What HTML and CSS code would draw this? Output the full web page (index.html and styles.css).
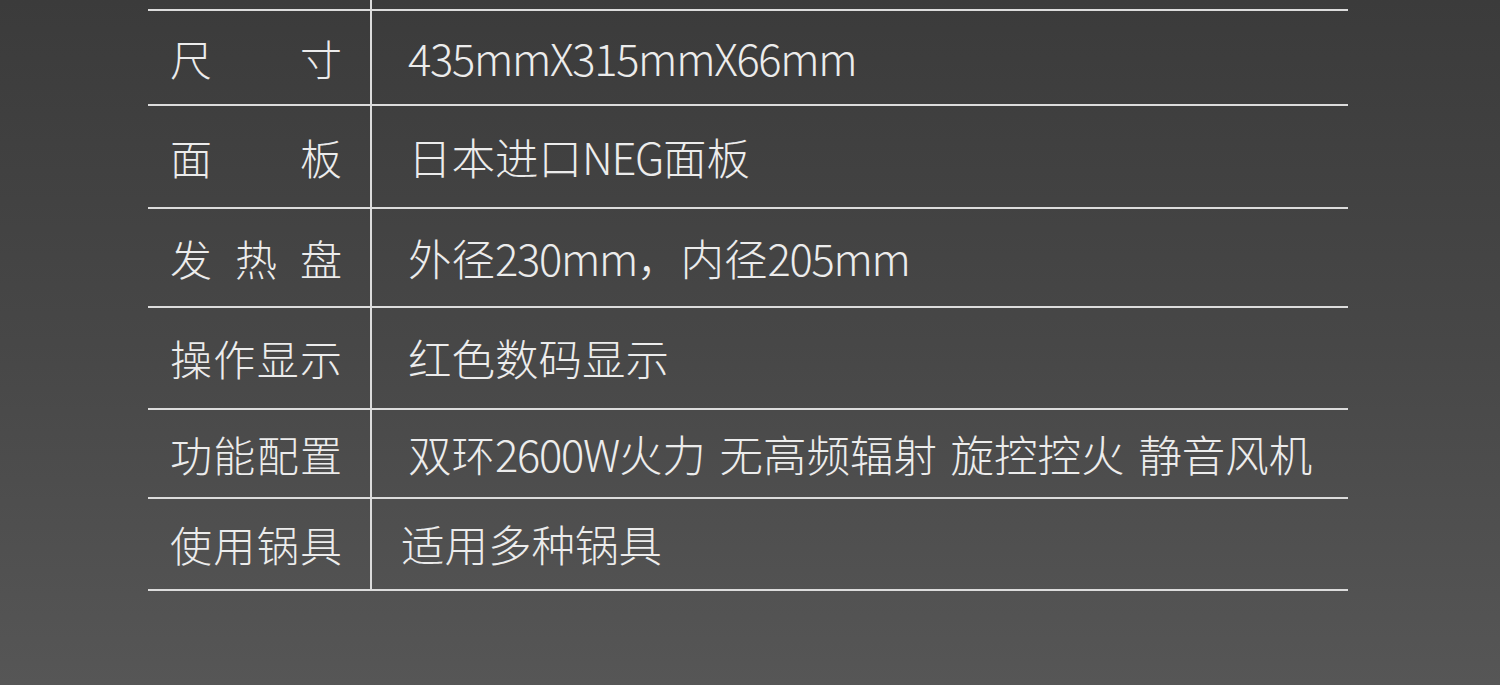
FILE: index.html
```html
<!DOCTYPE html>
<html>

<head>
  <meta charset="utf-8">
  <meta name="viewport" content="width=device-width">
  <title>产品参数</title>
  <link rel="stylesheet" href="styles.css">
</head>

<body>
  <div class="spec">
    <div class="row row-tail">
      <div class="label"></div>
      <div class="value"></div>
    </div>
    <div class="row">
      <div class="label"><span>尺寸</span></div>
      <div class="value"><span class="num">435mmX315mmX66mm</span></div>
    </div>
    <div class="row">
      <div class="label"><span>面板</span></div>
      <div class="value">日本进口<span class="num">NEG</span>面板</div>
    </div>
    <div class="row">
      <div class="label"><span>发热盘</span></div>
      <div class="value">外径<span class="num">230mm</span>，内径<span class="num">205mm</span></div>
    </div>
    <div class="row">
      <div class="label"><span>操作显示</span></div>
      <div class="value">红色数码显示</div>
    </div>
    <div class="row">
      <div class="label"><span>功能配置</span></div>
      <div class="value">双环<span class="num">2600W</span>火力 无高频辐射 旋控控火 静音风机</div>
    </div>
    <div class="row">
      <div class="label"><span>使用锅具</span></div>
      <div class="value value-left">适用多种锅具</div>
    </div>
  </div>
</body>

</html>
```

FILE: styles.css
```css
/* Reset default styles */
html,
body {
  margin: 0;
  padding: 0;
}

body {
  width: 1500px;
  height: 685px;
  background: linear-gradient(to bottom, #3b3b3b 0%, #474747 50%, #565656 100%);
  font-family: "Noto Sans CJK SC", "Noto Sans", sans-serif;
  font-weight: 300;
  color: #ececec;
  overflow: hidden;
}

/* Spec table */
.spec {
  margin-left: 148px;
  width: 1200px;
  display: grid;
  grid-template-rows: 11px 95px 103px 99px 102px 89px 92px;
}

.row {
  display: grid;
  grid-template-columns: 224px 1fr;
  border-bottom: 2px solid #dcdcdc;
}

.label {
  border-right: 2px solid #dcdcdc;
  padding-left: 22px;
  display: flex;
  align-items: center;
}

.label span {
  width: 172px;
  font-size: 42px;
  line-height: 1;
  text-align: justify;
  text-align-last: justify;
}

.value {
  padding-left: 36px;
  display: flex;
  align-items: center;
  font-size: 43.5px;
  line-height: 1;
  white-space: pre;
  word-spacing: 4px;
}

.value-left {
  padding-left: 29px;
}

/* latin runs sit a little tighter */
.num {
  letter-spacing: -1.3px;
}
```
